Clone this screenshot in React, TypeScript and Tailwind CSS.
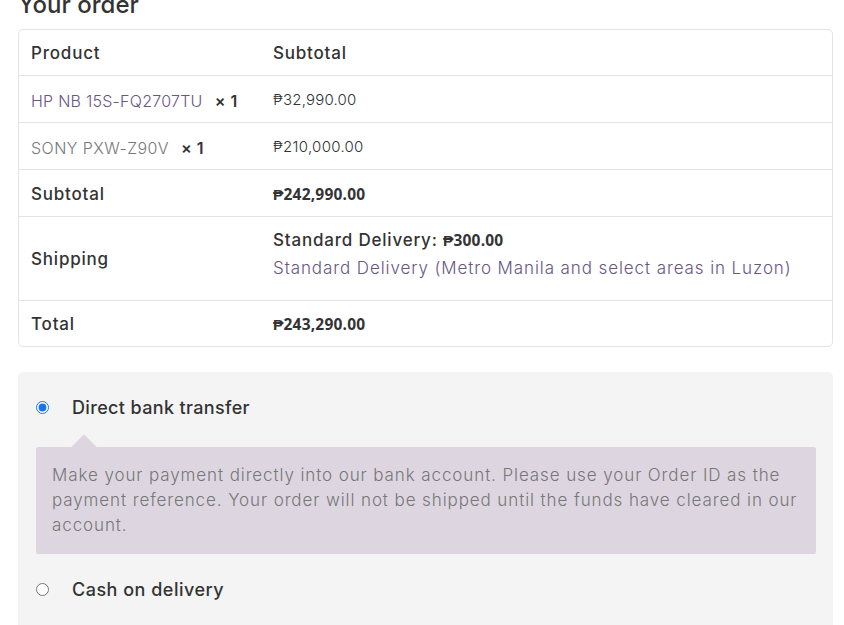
import React, { useState } from 'react'

const money = "font-['Open_Sans',sans-serif] text-[15.5px] font-bold tracking-[0.2px]"
const cell = 'border-t border-[#e3e3e3] px-3 pt-[3px]'

export default function App() {
  const [method, setMethod] = useState('bacs')

  return (
    <div className="min-h-screen bg-white font-['Inter',sans-serif] text-[#333]">
      <div className="pl-[18px] pr-[11px] pb-10">
        <h3 className="-mt-[10px] mb-[10px] text-[24px] font-medium leading-[29px] text-[#333]">Your order</h3>

        {/* Order review table */}
        <table className="w-full border-separate border-spacing-0 rounded-[5px] border border-[#e3e3e3] text-left">
          <thead>
            <tr className="text-[17px] font-medium tracking-[0.8px]">
              <th className="h-[45px] w-[242px] px-3 pt-[2px] font-medium">Product</th>
              <th className="h-[45px] px-3 pt-[2px] font-medium">Subtotal</th>
            </tr>
          </thead>
          <tbody>
            <tr>
              <td className={`h-[47px] ${cell} whitespace-nowrap text-[16px] font-light tracking-[0.25px]`}>
                <span className="text-[#6a5683]">HP NB 15S-FQ2707TU</span>
                <strong className="ml-3 font-semibold tracking-[0.5px] text-[#333]">× 1</strong>
              </td>
              <td className={`h-[47px] ${cell} text-[15px] font-light tracking-[0.2px]`}>₱32,990.00</td>
            </tr>
            <tr>
              <td className={`h-[47px] ${cell} whitespace-nowrap text-[16px] font-light tracking-[0.45px]`}>
                <span className="text-[#777]">SONY PXW-Z90V</span>
                <strong className="ml-3 font-semibold tracking-[0.5px] text-[#333]">× 1</strong>
              </td>
              <td className={`h-[47px] ${cell} text-[15px] font-light tracking-[0.3px]`}>₱210,000.00</td>
            </tr>
          </tbody>
          <tfoot>
            <tr>
              <th className={`h-[47px] ${cell} text-[17px] font-medium tracking-[0.8px]`}>Subtotal</th>
              <td className={`h-[47px] ${cell} ${money}`}>₱242,990.00</td>
            </tr>
            <tr>
              <th className={`h-[84px] ${cell} text-[17px] font-medium tracking-[0.8px]`}>Shipping</th>
              <td className="border-t border-[#e3e3e3] px-3 pt-[9px] pb-[18px]">
                <div className="text-[17px] font-medium leading-[28px] tracking-[0.8px]">
                  Standard Delivery: <span className={money}>₱300.00</span>
                </div>
                <p className="text-[17px] font-light leading-[28px] tracking-[0.9px] text-[#6a5683]">
                  Standard Delivery (Metro Manila and select areas in Luzon)
                </p>
              </td>
            </tr>
            <tr>
              <th className={`h-[46px] ${cell} text-[17px] font-medium tracking-[0.8px]`}>Total</th>
              <td className={`h-[46px] ${cell} ${money}`}>₱243,290.00</td>
            </tr>
          </tfoot>
        </table>

        {/* Payment methods */}
        <div className="mt-[25px] rounded-t-[5px] bg-[#f4f4f4] pl-[18px] pr-[17px] pt-[22px] pb-12">
          <ul className="flex flex-col">
            <li>
              <label className="flex h-[26px] cursor-pointer items-center gap-[23px]">
                <input
                  type="radio"
                  name="payment_method"
                  checked={method === 'bacs'}
                  onChange={() => setMethod('bacs')}
                  className="h-[13px] w-[13px] accent-[#1a73e8]"
                />
                <span className="text-[18px] font-medium tracking-[0.35px]">Direct bank transfer</span>
              </label>
              {method === 'bacs' && (
                <div className="relative mt-[27px] rounded-[2px] bg-[#ddd6e1] p-4 text-[17px] font-light leading-[25px] tracking-[0.9px] text-[#777]">
                  <span className="absolute -top-[9px] left-[39px] h-[18px] w-[18px] rotate-45 bg-[#ddd6e1]" />
                  <p className="relative">
                    Make your payment directly into our bank account. Please use your Order ID as the payment reference. Your order will not be shipped until the funds have cleared in our account.
                  </p>
                </div>
              )}
            </li>
            <li className="mt-[22px]">
              <label className="flex h-[26px] cursor-pointer items-center gap-[23px]">
                <input
                  type="radio"
                  name="payment_method"
                  checked={method === 'cod'}
                  onChange={() => setMethod('cod')}
                  className="h-[13px] w-[13px] accent-[#1a73e8]"
                />
                <span className="text-[18px] font-medium tracking-[0.5px]">Cash on delivery</span>
              </label>
            </li>
          </ul>
        </div>
      </div>
    </div>
  )
}
